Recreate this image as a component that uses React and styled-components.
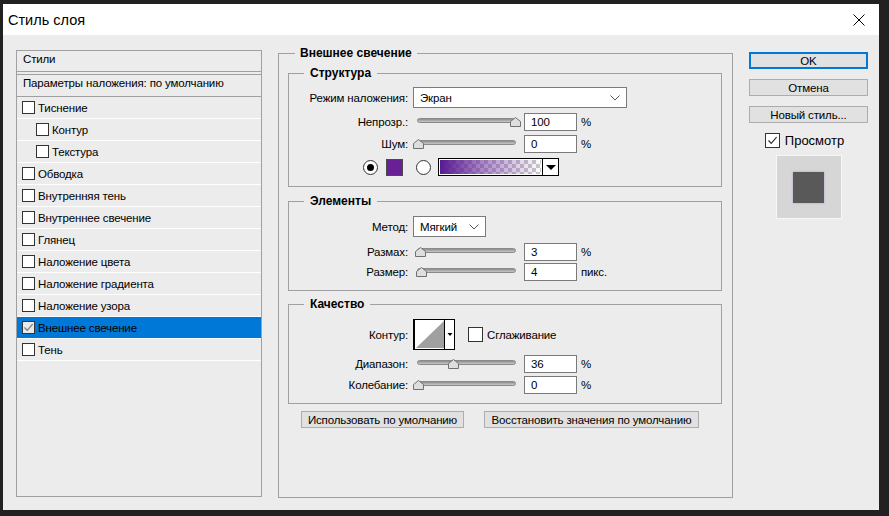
import React from "react";
import styled, { createGlobalStyle } from "styled-components";

const GlobalStyle = createGlobalStyle`
  html, body {
    margin: 0;
    padding: 0;
    background: #212121;
  }
  body {
    font-family: "Liberation Sans", Arial, sans-serif;
    font-size: 11.5px;
    letter-spacing: -0.15px;
    color: #000;
  }
  * {
    box-sizing: border-box;
  }
`;

const styleItems = [
  { name: "Тиснение" },
  { name: "Контур", indent: true },
  { name: "Текстура", indent: true },
  { name: "Обводка" },
  { name: "Внутренняя тень" },
  { name: "Внутреннее свечение" },
  { name: "Глянец" },
  { name: "Наложение цвета" },
  { name: "Наложение градиента" },
  { name: "Наложение узора" },
  { name: "Внешнее свечение", checked: true, active: true },
  { name: "Тень" },
];

const Check = ({ color = "#333" }) => (
  <svg width="11" height="11" viewBox="0 0 11 11">
    <polyline points="1.5,5.5 4.2,8.3 9.6,2.2" fill="none" stroke={color} strokeWidth="1.2" />
  </svg>
);

const Chevron = () => (
  <svg width="10" height="6" viewBox="0 0 10 6">
    <polyline points="0.5,0.5 5,5 9.5,0.5" fill="none" stroke="#555" strokeWidth="1" />
  </svg>
);

const CloseIcon = () => (
  <svg width="12" height="12" viewBox="0 0 12 12">
    <line x1="0.5" y1="0.5" x2="11.5" y2="11.5" stroke="#000" strokeWidth="1" />
    <line x1="11.5" y1="0.5" x2="0.5" y2="11.5" stroke="#000" strokeWidth="1" />
  </svg>
);

const ThumbIcon = () => (
  <svg width="11" height="10" viewBox="0 0 11 10">
    <path d="M0.5 9.5 V4.5 L5.5 0.5 L10.5 4.5 V9.5 Z" fill="#dedede" stroke="#707070" strokeWidth="1" />
  </svg>
);

const ContourIcon = () => (
  <svg width="42" height="31" viewBox="0 0 42 31">
    <rect x="0.5" y="0.5" width="41" height="30" fill="#fff" stroke="#000" />
    <line x1="1.5" y1="1" x2="1.5" y2="30" stroke="#000" />
    <polygon points="3,29 31,2 31,29" fill="#a0a0a0" />
    <line x1="31.5" y1="1" x2="31.5" y2="30" stroke="#000" />
    <polygon points="34.5,14 39.5,14 37,17" fill="#000" />
  </svg>
);

const Frame = styled.div`
  width: 889px;
  height: 516px;
  padding: 4px 10px 6px 3px;
  background: #212121;
`;

const Window = styled.div`
  height: 100%;
  display: flex;
  flex-direction: column;
  background: #ececec;
`;

const TitleBar = styled.div`
  height: 31px;
  flex: none;
  display: flex;
  align-items: center;
  justify-content: space-between;
  padding: 0 14px 0 5px;
  background: #fff;
  font-size: 14.5px;
  letter-spacing: 0;
`;

const Body = styled.div`
  flex: 1;
  min-height: 0;
  display: flex;
  gap: 16px;
  padding: 11px 11px 12px 13px;
`;

const StylesPanel = styled.div`
  width: 246px;
  flex: none;
  margin: 4px 0 1px;
  border: 1px solid #a0a0a0;
  display: flex;
  flex-direction: column;
`;

const PanelHeader = styled.div`
  height: ${(p) => p.$h}px;
  padding: 1px 0 0 6px;
  line-height: 15px;
  border-bottom: 1px solid #a0a0a0;
  ${(p) => (p.$topLine ? "border-top: 1px solid #a0a0a0; margin-top: 2px;" : "")}
`;

const StyleRow = styled.div`
  height: 22px;
  display: flex;
  align-items: center;
  gap: 3px;
  padding-left: ${(p) => (p.$indent ? 19 : 5)}px;
  border-bottom: 1px solid #fff;
  background: ${(p) => (p.$active ? "#0078d7" : "transparent")};
`;

const Box = styled.span`
  width: ${(p) => p.$size}px;
  height: ${(p) => p.$size}px;
  flex: none;
  display: inline-flex;
  align-items: center;
  justify-content: center;
  border: 1px solid #333;
  background: ${(p) => p.$bg || "#fff"};
`;

const Middle = styled.fieldset`
  width: 455px;
  flex: none;
  margin: 0;
  padding: 0;
  min-width: 0;
  border: 1px solid #a0a0a0;
`;

const Group = styled.fieldset`
  margin: ${(p) => p.$mt}px 0 0;
  padding: ${(p) => p.$pad};
  min-width: 0;
  border: 1px solid #a0a0a0;
`;

const Title = styled.legend`
  margin-left: ${(p) => (p.$outer ? 16 : 15)}px;
  padding: 0 ${(p) => (p.$outer ? 5 : 6)}px;
  font-weight: bold;
  font-size: 12px;
  letter-spacing: 0;
  line-height: 14px;
`;

const MiddleContent = styled.div`
  padding: 6px 10px 0 9px;
`;

const Row = styled.div`
  display: flex;
  align-items: center;
  height: ${(p) => p.$h}px;
  margin-top: ${(p) => p.$mt || 0}px;
  padding-left: ${(p) => p.$pl || 0}px;
`;

const Label = styled.span`
  width: 119px;
  flex: none;
  margin-right: 5px;
  text-align: right;
  white-space: nowrap;
`;

const Select = styled.div`
  width: ${(p) => p.$w}px;
  height: 21px;
  display: flex;
  align-items: center;
  justify-content: space-between;
  padding: 0 6px;
  background: #fff;
  border: 1px solid #7a7a7a;
`;

const SliderWrap = styled.div`
  position: relative;
  width: 106px;
  height: 18px;
  margin-right: 5px;
  flex: none;
`;

const Track = styled.div`
  position: absolute;
  left: 4px;
  top: 5px;
  width: 99px;
  height: 5px;
  border-radius: 3px;
  border: 1px solid #8a8a8a;
  background: linear-gradient(#8c8c8c, #c8c8c8);
`;

const Thumb = styled.div`
  position: absolute;
  top: 4px;
  width: 11px;
  height: 10px;
  display: flex;
`;

const NumField = styled.div`
  width: 53px;
  height: 18px;
  flex: none;
  padding-left: 6px;
  line-height: 16px;
  background: #fff;
  border: 1px solid #7a7a7a;
`;

const Unit = styled.span`
  margin-left: 4px;
`;

const Radio = styled.span`
  width: 15px;
  height: 15px;
  flex: none;
  border-radius: 50%;
  border: 1px solid #333;
  background: #fff;
  display: inline-flex;
  align-items: center;
  justify-content: center;

  &::after {
    content: "";
    width: 7px;
    height: 7px;
    border-radius: 50%;
    background: ${(p) => (p.$on ? "#000" : "transparent")};
  }
`;

const Swatch = styled.span`
  width: 17px;
  height: 17px;
  flex: none;
  margin: 0 13px 0 8px;
  background: #6a2095;
  border: 1px solid #4a4a4a;
`;

const GradientPicker = styled.div`
  width: 121px;
  height: 18px;
  margin-left: 7px;
  display: flex;
  border: 1px solid #000;
`;

const GradientStrip = styled.div`
  flex: 1;
  border: 1px solid #fff;
  background: linear-gradient(90deg, rgba(88, 26, 145, 1), rgba(110, 50, 160, 0.55) 45%, rgba(150, 110, 190, 0) 100%),
    repeating-conic-gradient(#c9c9c9 0 25%, #ffffff 0 50%) 0 0 / 8px 8px;
`;

const GradientArrow = styled.div`
  width: 16px;
  border-left: 1px solid #000;
  background: #fff;
  display: flex;
  align-items: center;
  justify-content: center;

  &::after {
    content: "";
    border-left: 5px solid transparent;
    border-right: 5px solid transparent;
    border-top: 5px solid #000;
  }
`;

const CheckLabel = styled.span`
  margin-left: 4px;
`;

const ButtonRow = styled.div`
  display: flex;
  gap: 20px;
  margin: 7px 0 0 13px;
`;

const Button = styled.div`
  width: ${(p) => p.$w}px;
  height: 17px;
  flex: none;
  display: flex;
  align-items: center;
  justify-content: center;
  background: #e1e1e1;
  border: ${(p) => (p.$primary ? "2px solid #0078d7" : "1px solid #adadad")};
  white-space: nowrap;
`;

const Side = styled.div`
  width: 119px;
  flex: none;
  margin-top: 6px;
  display: flex;
  flex-direction: column;
  align-items: center;
  gap: 10px;
`;

const PreviewToggle = styled.div`
  display: flex;
  align-items: center;
  gap: 5px;
  margin-left: -8px;
  font-size: 13px;
  letter-spacing: 0;
`;

const PreviewBox = styled.div`
  width: 66px;
  height: 64px;
  margin-top: -3px;
  display: flex;
  align-items: center;
  justify-content: center;
  background: #d6d6d6;
  border: 1px solid #f7f7f7;
`;

const PreviewSquare = styled.div`
  width: 31px;
  height: 31px;
  background: #595959;
  box-shadow: 0 0 2px rgba(150, 80, 200, 0.45);
`;

const Slider = ({ value }) => (
  <SliderWrap>
    <Track />
    <Thumb style={{ left: 5 + value * 0.977 - 5.5 }}>
      <ThumbIcon />
    </Thumb>
  </SliderWrap>
);

const SliderRow = ({ label, value, unit, h = 18, mt }) => (
  <Row $h={h} $mt={mt}>
    <Label>{label}</Label>
    <Slider value={value} />
    <NumField>{value}</NumField>
    <Unit>{unit}</Unit>
  </Row>
);

export default function App() {
  return (
    <>
      <GlobalStyle />
      <Frame>
        <Window>
          <TitleBar>
            <span>Стиль слоя</span>
            <CloseIcon />
          </TitleBar>
          <Body>
            <StylesPanel>
              <PanelHeader $h={21}>Стили</PanelHeader>
              <PanelHeader $h={23} $topLine>
                Параметры наложения: по умолчанию
              </PanelHeader>
              {styleItems.map((item) => (
                <StyleRow key={item.name} $indent={item.indent} $active={item.active}>
                  <Box $size={13} $bg={item.active ? "#e9e9e9" : "#fff"}>
                    {item.checked && <Check color="#777" />}
                  </Box>
                  <span>{item.name}</span>
                </StyleRow>
              ))}
            </StylesPanel>

            <Middle>
              <Title $outer>Внешнее свечение</Title>
              <MiddleContent>
                <Group $mt={0} $pad="7px 0 10px">
                  <Title>Структура</Title>
                  <Row $h={21}>
                    <Label>Режим наложения:</Label>
                    <Select $w={214}>
                      <span>Экран</span>
                      <Chevron />
                    </Select>
                  </Row>
                  <SliderRow label="Непрозр.:" value={100} unit="%" mt={5} />
                  <SliderRow label="Шум:" value={0} unit="%" mt={4} />
                  <Row $h={18} $mt={5} $pl={74}>
                    <Radio $on />
                    <Swatch />
                    <Radio />
                    <GradientPicker>
                      <GradientStrip />
                      <GradientArrow />
                    </GradientPicker>
                  </Row>
                </Group>

                <Group $mt={7} $pad="8px 0 9px">
                  <Title>Элементы</Title>
                  <Row $h={21}>
                    <Label>Метод:</Label>
                    <Select $w={73}>
                      <span>Мягкий</span>
                      <Chevron />
                    </Select>
                  </Row>
                  <SliderRow label="Размах:" value={3} unit="%" mt={6} />
                  <SliderRow label="Размер:" value={4} unit="пикс." mt={2} />
                </Group>

                <Group $mt={6} $pad="8px 0 9px">
                  <Title>Качество</Title>
                  <Row $h={31}>
                    <Label>Контур:</Label>
                    <ContourIcon />
                    <Box $size={15} style={{ marginLeft: 13 }} />
                    <CheckLabel>Сглаживание</CheckLabel>
                  </Row>
                  <SliderRow label="Диапазон:" value={36} unit="%" mt={5} />
                  <SliderRow label="Колебание:" value={0} unit="%" mt={3} />
                </Group>

                <ButtonRow>
                  <Button $w={163}>Использовать по умолчанию</Button>
                  <Button $w={215}>Восстановить значения по умолчанию</Button>
                </ButtonRow>
              </MiddleContent>
            </Middle>

            <Side>
              <Button $w={119} $primary>
                OK
              </Button>
              <Button $w={119}>Отмена</Button>
              <Button $w={119}>Новый стиль...</Button>
              <PreviewToggle>
                <Box $size={15}>
                  <Check />
                </Box>
                <span>Просмотр</span>
              </PreviewToggle>
              <PreviewBox>
                <PreviewSquare />
              </PreviewBox>
            </Side>
          </Body>
        </Window>
      </Frame>
    </>
  );
}
